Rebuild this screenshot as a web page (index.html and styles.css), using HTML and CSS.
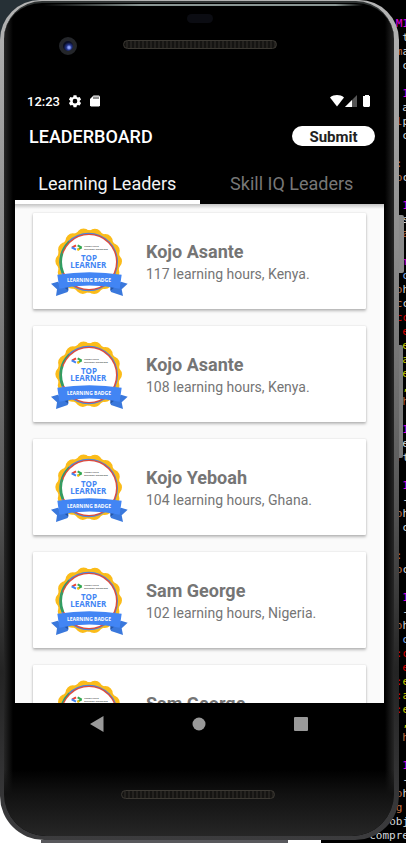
FILE: index.html
```html
<!DOCTYPE html>
<html lang="en">
<head>
<meta charset="utf-8">
<meta name="viewport" content="width=device-width, initial-scale=1">
<title>Leaderboard</title>
<link rel="stylesheet" href="styles.css">
</head>
<body>
<div class="desktop">
<pre class="terminal" aria-hidden="true"><span class="m">M1</span>
<span class="w"> t</span>
<span class="w"><i class="o">m</i>a</span>
<span class="w"> c</span>

<span class="m"> 1</span>
<span class="w"> a</span>
<span class="w"><i class="o">l</i>p</span>
<span class="w"> c</span>

<span class="o">: </span>
<span class="w"><i class="o">o</i>c</span>

<span class="m"> 1</span>
<span class="w"> s</span>
<span class="o"> a</span>

<span class="m"> m</span>
<span class="b"> c</span>
<span class="w"><i class="o">o</i>h</span>
<span class="w"><i class="o">c</i>c</span>
<span class="r">cc</span>
<span class="r"> e</span>
<span class="y"> e</span>
<span class="y"> a</span>
<span class="y"> e</span>
<span class="y"> ,</span>
<span class="o"> h</span>

<span class="m"> 1</span>
<span class="w"> e</span>
<span class="w"><i class="o">r</i>t</span>

<span class="m"> 1</span>
<span class="w"> -</span>
<span class="w"><i class="o">o</i>h</span>
<span class="w"> c</span>

<span class="o">: </span>
<span class="w"><i class="o">o</i>c</span>

<span class="m"> 1</span>
<span class="w"> -</span>
<span class="w"><i class="o">o</i>h</span>
<span class="b"> c</span>
<span class="r">:c</span>
<span class="r"> e</span>
<span class="y"><i class="r">:</i>e</span>
<span class="y"><i class="r">:</i>a</span>
<span class="y"><i class="r">:</i>e</span>
<span class="y"> ,</span>
<span class="o"> h</span>

<span class="m"> 1</span>
<span class="w"> -</span>
<span class="w"><i class="o">o</i>h</span>
<span class="o">g </span>
<span class="w">obj</span>
<span class="w">compre</span></pre>
<div class="phone">
  <div class="body">
    <div class="top-bezel">
      <span class="camera"></span>
      <span class="sensor"></span>
      <span class="speaker"></span>
    </div>
    <main class="screen">
      <div class="status">
        <time>12:23</time>
        <svg width="14" height="14" viewBox="0 0 24 24"><path fill="#fff" fill-rule="evenodd" d="M9.500 2h5l.6 3 1.900 1.100 3-1 2.400 4.300-2.300 2v2l2.300 2-2.400 4.300-3-1-1.900 1.100-.6 3h-5l-.6-3L7 18.700l-3 1-2.400-4.300 2.300-2v-2l-2.300-2L4 5.100l3 1L8.900 5zM12 8.300a4 4 0 1 0 0 8 4 4 0 0 0 0-8z"/></svg>
        <svg width="10" height="12" viewBox="0 0 20 24"><path fill="#fff" d="M7 1h11l2 2v18l-2 2H2l-2-2V8z"/><path stroke="#222" stroke-width="2" d="M8 3v5M12 3v5M16 3v5"/></svg>
        <span class="signals">
          <svg width="14" height="12" viewBox="0 0 14 12"><path fill="#fff" d="M0 2.500C4-.7 10-.7 14 2.500L7 11.500z"/></svg>
          <svg width="12" height="12" viewBox="0 0 12 12"><path fill="#555" d="M12 0v12H0z"/><path fill="#fff" d="M7 5v7H0z"/></svg>
          <svg class="battery" width="8" height="12" viewBox="0 0 8 12"><path fill="#fff" d="M2 0h4v1h1v10l-1 1H1l-1-1V1h2z"/></svg>
        </span>
      </div>
      <header class="bar">
        <h1>LEADERBOARD</h1>
        <button class="submit" type="button">Submit</button>
      </header>
      <div class="tabs" role="tablist">
        <button class="tab active" type="button" role="tab" aria-selected="true">Learning Leaders</button>
        <button class="tab" type="button" role="tab" aria-selected="false">Skill IQ Leaders</button>
      </div>
      <ul class="list">
        <li class="card">
          <svg class="badge" viewBox="60 60 237 213">
            <g id="badge">
              <circle cx="176" cy="166" r="78" fill="none" stroke="#fbbc1a" stroke-width="44" stroke-linecap="round" pathLength="14" stroke-dasharray="0 1"/>
              <circle cx="176" cy="166" r="94" fill="#fbbc1a"/>
              <circle cx="176" cy="168" r="88" fill="#4a86e0"/>
              <path d="M116 104A88 88 0 0 0 95 202L176 168Z" fill="#2f9f62"/>
              <circle cx="177" cy="168" r="85" fill="#e04c3c"/>
              <path d="M96 142A85 85 0 0 0 98 202L176 168Z" fill="#2f9f62"/>
              <circle cx="177" cy="168" r="81" fill="#fff"/>
              <g fill="none" stroke-width="6">
                <path d="M138 118l-12 7" stroke="#ea4335"/><path d="M125 124l13 7" stroke="#4285f4"/>
                <path d="M143 118l12 7" stroke="#34a853"/><path d="M155 124l-12 7" stroke="#34a853"/><path d="M148 129l-6 3" stroke="#fbbc05"/>
              </g>
              <text x="163" y="122" class="badge-tiny">Google Africa</text>
              <text x="163" y="131" class="badge-tiny">Developer Scholarship</text>
              <text x="177" y="166" class="badge-title">TOP</text>
              <text x="175" y="186" class="badge-title">LEARNER</text>
              <path d="M63 233l20-6 32 24-2 7-35 12 3-20zM293 233l-20-6-32 24 2 7 36 12-4-20z" fill="#3a78dc"/>
              <path d="M97 240l18 2v12zM259 240l-18 2v12z" fill="#2455a8"/>
              <path d="M82 206Q178 191 275 206L269 248Q178 229 88 248Z" fill="#4285f4"/>
              <text x="177" y="227" class="badge-ribbon">LEARNING BADGE</text>
            </g>
          </svg>
          <div class="who"><h2>Kojo Asante</h2><p>117 learning hours, Kenya.</p></div>
        </li>
        <li class="card"><svg class="badge" viewBox="60 60 237 213"><use href="#badge"/></svg><div class="who"><h2>Kojo Asante</h2><p>108 learning hours, Kenya.</p></div></li>
        <li class="card"><svg class="badge" viewBox="60 60 237 213"><use href="#badge"/></svg><div class="who"><h2>Kojo Yeboah</h2><p>104 learning hours, Ghana.</p></div></li>
        <li class="card"><svg class="badge" viewBox="60 60 237 213"><use href="#badge"/></svg><div class="who"><h2>Sam George</h2><p>102 learning hours, Nigeria.</p></div></li>
        <li class="card"><svg class="badge" viewBox="60 60 237 213"><use href="#badge"/></svg><div class="who"><h2>Sam George</h2></div></li>
      </ul>
      <nav class="nav">
        <button type="button" aria-label="Back"><svg width="14" height="16" viewBox="0 0 14 16"><path fill="#999" d="M13.500 0v16L0 8z"/></svg></button>
        <button type="button" aria-label="Home"><svg width="14" height="14" viewBox="0 0 14 14"><circle cx="7" cy="7" r="6.500" fill="#999"/></svg></button>
        <button type="button" aria-label="Overview"><svg width="14" height="14" viewBox="0 0 14 14"><rect width="14" height="14" rx="1" fill="#999"/></svg></button>
      </nav>
    </main>
    <div class="bottom-bezel"><span class="speaker"></span></div>
  </div>
</div>
</div>
</body>
</html>
```
FILE: styles.css
```css
* { box-sizing: border-box; }

body {
  margin: 0;
  background: #000;
  font-family: Roboto, "Liberation Sans", sans-serif;
}

h1, h2, p, ul { margin: 0; padding: 0; }

button {
  border: 0;
  padding: 0;
  background: none;
  font-family: inherit;
}

.desktop {
  display: grid;
  grid-template: minmax(0, 1fr) / minmax(0, 1fr);
  height: 100vh;
  overflow: hidden;
  background:
    linear-gradient(90deg, #fff 10%, #58585c 10% 71%, #fff 71% 79%, #000 79%) 0 100% / 100% 3px no-repeat,
    linear-gradient(#fff, #fff) 0 100% / 30% 160px no-repeat,
    linear-gradient(#263036, #263036) 0 0 / 160px 60px no-repeat,
    #000;
}

.terminal {
  grid-area: 1 / 1;
  justify-self: end;
  margin: 17px -3px 0 0;
  font: 11px/14px "DejaVu Sans Mono", monospace;
  text-align: right;
}

.terminal i { font-style: normal; }
.m { color: #e000e0; }
.w { color: #d4d8dc; }
.o { color: #c07040; }
.b { color: #86b4ec; }
.r { color: #d80000; }
.y { color: #c8c800; }

.phone {
  grid-area: 1 / 1;
  z-index: 1;
  position: relative;
  display: flex;
  margin: 0 7px 3px 0;
  padding: 1px 5px 4px 4px;
  border-radius: 40px 40px 44px 44px;
  background: linear-gradient(#b4b4b4, #8c8c8c 30%, #555 60%, #242424 80%, #3c3c3e);
}

.phone::before,
.phone::after {
  content: "";
  position: absolute;
  left: 100%;
  border-radius: 0 2px 2px 0;
}

.phone::before {
  top: 215px;
  width: 5px;
  height: 58px;
  background: #8a8a8a;
}

.phone::after {
  top: 345px;
  width: 4px;
  height: 113px;
  background: #7a7a7a;
}

.body {
  flex: 1;
  min-width: 0;
  display: flex;
  flex-direction: column;
  border-radius: 38px 38px 42px 42px;
  border-top: 2px solid #303434;
  padding: 0 10px 0 11px;
  background:
    linear-gradient(90deg, transparent 10%, #8a9694 35% 85%, transparent 92%) 0 1px / 100% 2px no-repeat,
    linear-gradient(transparent 92%, #111 95%, #262626),
    linear-gradient(90deg, #262626, #000 9px calc(100% - 9px), #262626);
}

.top-bezel {
  display: grid;
  grid-template-columns: 1fr 154px 1fr;
  grid-template-rows: 9px 18px;
  row-gap: 12px;
  align-items: center;
  align-content: start;
  height: 87px;
  padding-top: 11px;
}

.camera {
  grid-area: 2 / 1;
  width: 18px;
  height: 18px;
  margin: 4px 0 0 44px;
  border: 4px solid #24262a;
  border-radius: 50%;
  background: radial-gradient(circle at 60% 65%, #8ea4ff 10%, #26378c 30%, #0a0e24 60%);
}

.sensor {
  grid-area: 1 / 2;
  justify-self: center;
  width: 26px;
  height: 9px;
  border-radius: 5px;
  background: #0b0c12;
}

.speaker {
  width: 154px;
  height: 9px;
  border: 1px solid #3c3933;
  border-radius: 5px;
  background: repeating-linear-gradient(90deg, #151412 0 2px, #24221f 2px 4px);
}

.top-bezel .speaker { grid-area: 2 / 2; }

.screen {
  flex: 1;
  min-height: 0;
  display: flex;
  flex-direction: column;
  color: #fff;
}

.status {
  display: flex;
  align-items: center;
  height: 22px;
  padding: 0 13px 0 12px;
}

.status time {
  margin-right: 8px;
  font-size: 13px;
  font-weight: 500;
}

.status > svg { margin-right: 8px; }

.signals {
  display: flex;
  gap: 1px;
  margin-left: auto;
}

.battery { margin-left: 5px; }

.bar {
  display: flex;
  align-items: center;
  justify-content: space-between;
  height: 48px;
  padding: 0 9px 0 14px;
}

.bar h1 {
  font-size: 18px;
  font-weight: 500;
}

.submit {
  width: 83px;
  height: 20px;
  border-radius: 10px;
  background: #fff;
  color: #222;
  font-size: 15px;
  font-weight: 700;
  line-height: 22px;
}

.tabs {
  display: grid;
  grid-template-columns: 1fr 1fr;
  height: 44px;
}

.tab {
  padding-top: 6px;
  border-bottom: 4px solid transparent;
  color: #777;
  font-size: 18px;
}

.tab.active {
  border-color: #fff;
  color: #f4f4f4;
}

.list {
  flex: 1;
  min-height: 0;
  overflow: hidden;
  display: flex;
  flex-direction: column;
  gap: 17px;
  padding: 9px 18px 0;
  background: linear-gradient(#c4c4c4, #fafafa 5px);
  list-style: none;
}

.card {
  flex: none;
  display: flex;
  align-items: center;
  gap: 17px;
  height: 96px;
  padding: 0 17px;
  border-radius: 1px;
  background: #fff;
  box-shadow: 0 2px 3px rgba(0, 0, 0, 0.26), 0 0 2px rgba(0, 0, 0, 0.14);
  color: #757575;
}

.badge {
  flex: none;
  width: 79px;
  height: 71px;
}

.badge-tiny {
  font: 700 7px Roboto, sans-serif;
  fill: #555;
}

.badge-title {
  font: 700 24px "Open Sans", sans-serif;
  fill: #4285f4;
  text-anchor: middle;
}

.badge-ribbon {
  font: 700 15px "Open Sans", sans-serif;
  fill: #fff;
  text-anchor: middle;
}

.who {
  min-height: 48px;
  padding-top: 4px;
}

.card h2 {
  font-size: 18px;
  font-weight: 700;
  line-height: 22px;
}

.card p {
  font-size: 14px;
  line-height: 22px;
}

.nav {
  display: grid;
  grid-template-columns: repeat(3, 102px);
  justify-content: center;
  height: 42px;
  padding-right: 2px;
}

.nav button {
  display: grid;
  place-items: center;
}

.bottom-bezel {
  display: grid;
  justify-content: center;
  align-content: start;
  height: 91px;
  padding: 45px 4px 0 0;
}
```
